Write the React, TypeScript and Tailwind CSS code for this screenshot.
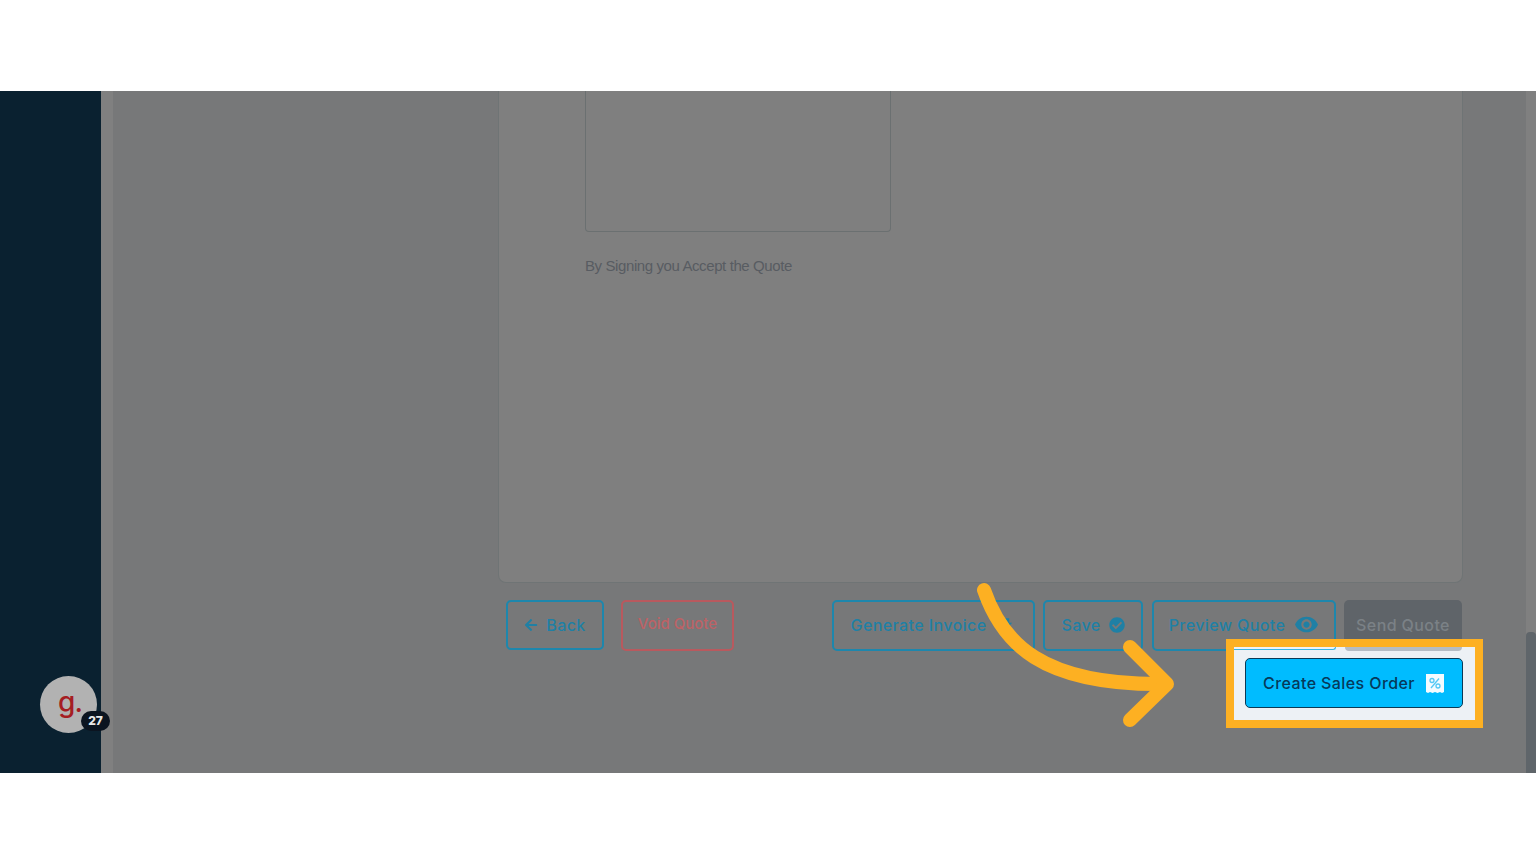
import { FaArrowLeft, FaCheckCircle } from 'react-icons/fa';
import { MdFileDownload, MdRemoveRedEye } from 'react-icons/md';

const font = 'font-["Inter","Noto_Sans",sans-serif]';

function ReceiptPercent() {
  return (
    <svg width="20" height="21" viewBox="0 0 20 21">
      <path d="M1 1h18v18l-2 1-2-1-2.500 1-2.500-1-2.500 1-2.500-1-2 1-2-1z" fill="#f4fbff" />
      <circle cx="7" cy="7.500" r="2" fill="none" stroke="#55c8f5" strokeWidth="1.300" />
      <circle cx="13" cy="13" r="2" fill="none" stroke="#55c8f5" strokeWidth="1.300" />
      <path d="M14 5.500 6 15" stroke="#55c8f5" strokeWidth="1.300" />
    </svg>
  );
}

function Arrow() {
  return (
    <svg className="absolute left-[970px] top-[485px]" width="220" height="160" viewBox="0 0 220 160" fill="none">
      <path
        d="M14 14C32 66 70 110 196 108"
        stroke="#fdb022"
        strokeWidth="14"
        strokeLinecap="round"
      />
      <path
        d="M160 71 197 108 160 144"
        stroke="#fdb022"
        strokeWidth="14"
        strokeLinecap="round"
        strokeLinejoin="round"
      />
    </svg>
  );
}

export default function App() {
  return (
    <div className={`flex h-[864px] w-full flex-col overflow-hidden bg-white ${font}`}>
      <div className="h-[91px] shrink-0" />

      <div className="relative flex h-[682px] shrink-0 bg-[#777879]">
        <aside className="flex w-[101px] shrink-0 flex-col justify-end bg-[#0a2130] pb-[40px] pl-[40px]">
          <div className="relative flex h-[57px] w-[57px] items-center justify-center rounded-full bg-[#b2b2b2]">
            <span className="pb-[6px] pl-[3px] text-[28px] leading-none font-medium tracking-[-1px] text-[#a51d22]">g.</span>
            <span className="absolute top-[35px] left-[41px] flex h-[20px] w-[29px] items-center justify-center rounded-full bg-[#0b1420] text-[12px] font-extrabold text-[#e8e8e8]">
              27
            </span>
          </div>
        </aside>
        <div className="w-[12px] shrink-0 bg-[#808080]" />

        <main className="flex w-[1413px] shrink-0 flex-col pl-[385px]">
          <section className="h-[492px] w-[965px] rounded-b-lg border-x border-b border-[#6f7475] bg-[#7f7f7f] pl-[86px]">
            <div className="h-[141px] w-[306px] rounded-b border-x border-b border-[#6b7071]" />
            <p className='mt-[24px] font-["Liberation_Sans",sans-serif] text-[15px] leading-[20px] tracking-[-0.4px] text-[#585c62]'>
              By Signing you Accept the Quote
            </p>
          </section>

          <div className="mt-[17px] flex w-[964px] items-start pl-[8px] text-[16px] font-medium tracking-[0.4px] text-[#1f80a5]">
            <button className="flex h-[50px] w-[98px] items-center justify-center gap-[8px] rounded-[5px] border-2 border-[#1d87ad]">
              <FaArrowLeft size={14} />
              Back
            </button>
            <button className="ml-[17px] h-[51px] w-[113px] rounded-[5px] border-2 border-[#b9595e] pb-[3px] text-[15px] tracking-normal text-[#bd6266]">
              Void Quote
            </button>
            <div className="ml-auto flex gap-[8px]">
              <button className="flex h-[51px] w-[203px] items-center justify-center gap-[12px] rounded-[5px] border-2 border-[#1d87ad] pb-[2px]">
                Generate Invoice
                <MdFileDownload size={18} />
              </button>
              <button className="flex h-[51px] w-[100px] items-center justify-center gap-[8px] rounded-[5px] border-2 border-[#1d87ad] pb-[2px]">
                Save
                <FaCheckCircle size={16} />
              </button>
              <button className="ml-[1px] flex h-[51px] w-[184px] items-center justify-center gap-[9px] rounded-[5px] border-2 border-[#1d87ad] pb-[2px]">
                Preview Quote
                <MdRemoveRedEye size={25} />
              </button>
              <button className="h-[51px] w-[118px] rounded-[5px] bg-[#5f6469] pb-[2px] text-[#7b8186]">Send Quote</button>
            </div>
          </div>
        </main>

        <div className="flex w-[10px] shrink-0 flex-col justify-end bg-[#808080]">
          <div className="h-[141px] rounded-t bg-[#5f656a]" />
        </div>

        <Arrow />

        {/* highlighted step, sits over the dimmed page */}
        <div className="absolute top-[548px] left-[1226px] flex h-[89px] w-[257px] border-[8px] border-[#fdb022] bg-[#edf1f5] pt-[11px] pl-[11px]">
          <span className="absolute top-0 left-0 h-[3px] w-[102px] rounded-br border-r border-b border-[#38b6e6]" />
          <span className="absolute top-0 left-[111px] h-[4px] w-[117px] rounded-b bg-[#b5bcc4]" />
          <button className="flex h-[50px] w-[218px] items-center justify-center gap-[10px] rounded-[5px] border-[1.5px] border-[#0b3a56] bg-[#00bcff] text-[16px] font-medium tracking-[0.4px] text-[#06395a]">
            Create Sales Order
            <ReceiptPercent />
          </button>
        </div>
      </div>

      <div className="flex-1" />
    </div>
  );
}
